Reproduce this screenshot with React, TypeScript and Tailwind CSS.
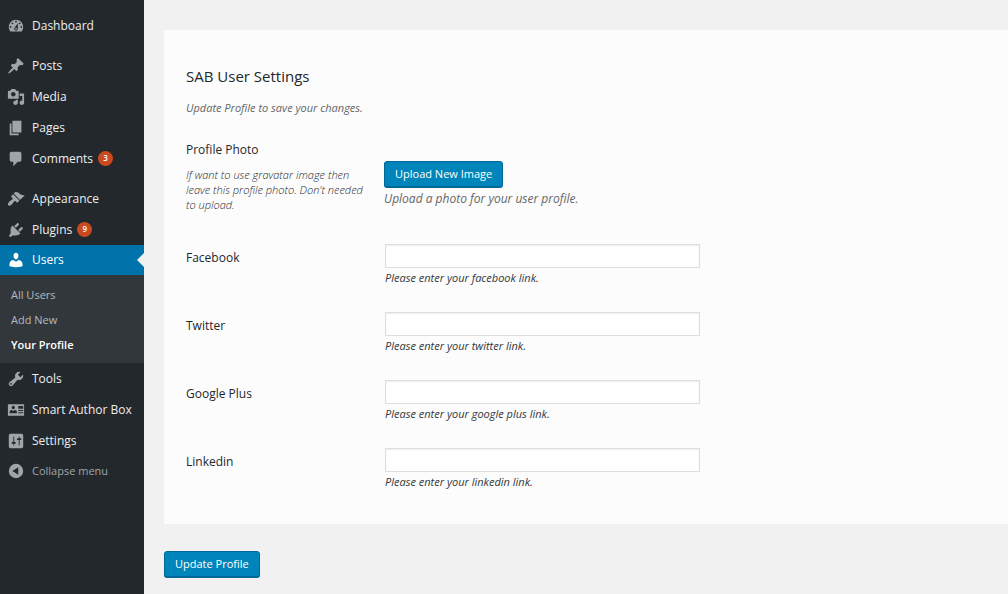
import React from "react";

const paths = {
  dashboard:
    "M3.76 16h12.48c1.1-1.37 1.76-3.11 1.76-5 0-4.42-3.58-8-8-8s-8 3.58-8 8c0 1.89.66 3.63 1.76 5zM10 4c.55 0 1 .45 1 1s-.45 1-1 1-1-.45-1-1 .45-1 1-1zM6 6c.55 0 1 .45 1 1s-.45 1-1 1-1-.45-1-1 .45-1 1-1zm8 0c.55 0 1 .45 1 1s-.45 1-1 1-1-.45-1-1 .45-1 1-1zm-5.37 5.55L12 7v6c0 1.1-.9 2-2 2s-2-.9-2-2c0-.57.24-1.08.63-1.45zM4 10c.55 0 1 .45 1 1s-.45 1-1 1-1-.45-1-1 .45-1 1-1zm12 0c.55 0 1 .45 1 1s-.45 1-1 1-1-.45-1-1 .45-1 1-1zm-5 3c0-.55-.45-1-1-1s-1 .45-1 1 .45 1 1 1 1-.45 1-1z",
  posts:
    "M10.44 3.02l1.82-1.82 6.36 6.35-1.83 1.82c-1.05-.68-2.48-.57-3.41.36l-.75.75c-.92.93-1.04 2.35-.35 3.41l-1.83 1.82-2.41-2.41-2.8 2.79c-.42.42-3.38 2.71-3.8 2.29s1.86-3.39 2.28-3.81l2.79-2.79L4.1 9.36l1.83-1.82c1.05.69 2.48.57 3.4-.36l.75-.75c.93-.92 1.05-2.35.36-3.41z",
  media:
    "M13 11V4c0-.55-.45-1-1-1h-1.67L9 1H5L3.67 3H2c-.55 0-1 .45-1 1v7c0 .55.45 1 1 1h10c.55 0 1-.45 1-1zM7 4.5c1.38 0 2.5 1.12 2.5 2.5S8.38 9.5 7 9.5 4.5 8.38 4.5 7 5.62 4.5 7 4.5zM14 6h5v10.5c0 1.38-1.12 2.5-2.5 2.5S14 17.88 14 16.5s1.12-2.5 2.5-2.5c.17 0 .34.02.5.05V9h-3V6zm-4 8.05V13h2v3.5c0 1.38-1.12 2.5-2.5 2.5S7 17.88 7 16.5 8.12 14 9.5 14c.17 0 .34.02.5.05z",
  pages: "M6 15V2h10v13H6zm-1 1h8v2H3V5h2v11z",
  comments:
    "M5 2h9c1.1 0 2 .9 2 2v7c0 1.1-.9 2-2 2h-2l-5 5v-5H5c-1.1 0-2-.9-2-2V4c0-1.1.9-2 2-2z",
  appearance:
    "M14.48 11.06L7.41 3.99l1.5-1.5c.5-.56 2.3-.47 3.51.32 1.21.8 1.43 1.28 2.91 2.1 1.18.64 2.45 1.26 4.45.85zm-.71.71L6.7 4.7 4.93 6.47c-.39.39-.39 1.02 0 1.41l1.06 1.06c.39.39.39 1.03 0 1.42-.6.6-1.43 1.11-2.21 1.69-.35.26-.7.53-1.01.84C1.43 14.23.4 16.08 1.4 17.07c.99 1 2.84-.03 4.18-1.36.31-.31.58-.66.85-1.02.57-.78 1.08-1.61 1.69-2.21.39-.39 1.02-.39 1.41 0l1.06 1.06c.39.39 1.02.39 1.41 0z",
  plugins:
    "M13.11 4.36L9.87 7.6 8 5.73l3.24-3.24c.35-.34 1.05-.2 1.56.32.52.51.66 1.21.31 1.55zm-8 1.77l.91-1.12 9.01 9.01-1.19.84c-.71.71-2.63 1.16-3.82 1.16H6.14L4.9 17.26c-.59.59-1.54.59-2.12 0-.59-.58-.59-1.53 0-2.12l1.24-1.24v-3.88c0-1.13.4-3.19 1.09-3.89zm7.26 3.97l3.24-3.24c.34-.35 1.04-.21 1.55.31.52.51.66 1.21.31 1.55l-3.24 3.25z",
  users:
    "M10 9.25c-2.27 0-2.73-3.44-2.73-3.44C7 4.02 7.82 2 9.97 2c2.16 0 2.98 2.02 2.71 3.81 0 0-.41 3.44-2.68 3.44zm0 2.57L12.72 10c2.39 0 4.52 2.33 4.52 4.53v2.49s-3.65 1.13-7.24 1.13c-3.65 0-7.24-1.13-7.24-1.13v-2.49c0-2.25 1.94-4.48 4.47-4.48z",
  tools:
    "M16.68 9.77c-1.34 1.34-3.3 1.67-4.95.99l-5.41 6.52c-.99.99-2.59.99-3.58 0s-.99-2.59 0-3.57l6.52-5.42c-.68-1.65-.35-3.61.99-4.95 1.28-1.28 3.12-1.62 4.72-1.06l-2.89 2.89 2.82 2.82 2.86-2.87c.53 1.58.18 3.39-1.08 4.65zM3.81 16.21c.4.39 1.04.39 1.43 0 .4-.4.4-1.04 0-1.43-.39-.4-1.03-.4-1.43 0-.39.39-.39 1.03 0 1.43z",
  authorBox:
    "M1.500 3.500h17c.3 0 .5.2.5.5v12c0 .3-.2.5-.5.5h-17c-.3 0-.5-.2-.5-.5V4c0-.3.2-.5.5-.5zM7 5.300a1.800 2 0 100 4 1.800 2 0 000-4zM3 13.500h8v-1.300c0-1.200-1-2.200-2.300-2.200L7 11l-1.700-1C4 10 3 11 3 12.200zM12.500 5.500v3H18v-3zM12.500 10v1.200H18V10zM12.500 12.500v1.200H18v-1.200z",
  settings:
    "M18 16V4c0-1.100-.9-2-2-2H4c-1.100 0-2 .9-2 2v12c0 1.100.9 2 2 2h12c1.100 0 2-.9 2-2zM8 11h1c.55 0 1 .45 1 1s-.45 1-1 1H8v1.500c0 .28-.22.5-.5.5s-.5-.22-.5-.5V13H6c-.55 0-1-.45-1-1s.45-1 1-1h1V5.500c0-.28.22-.5.5-.5s.5.22.5.5V11zm5-2h-1c-.55 0-1-.45-1-1s.45-1 1-1h1V5.500c0-.28.22-.5.5-.5s.5.22.5.5V7h1c.55 0 1 .45 1 1s-.45 1-1 1h-1v5.500c0 .28-.22.5-.5.5s-.5-.22-.5-.5V9z",
  collapse: "M10 2a8 8 0 100 16 8 8 0 000-16zM12.500 5.800v8.400L6 10z",
};

type IconName = keyof typeof paths;

function Icon({ name }: { name: IconName }) {
  return (
    <svg viewBox="0 0 20 20" className="size-[18px] shrink-0" fill="currentColor" fillRule="evenodd" aria-hidden="true">
      <path d={paths[name]} />
    </svg>
  );
}

interface Item {
  icon: IconName;
  label: string;
  count?: number;
}

const groups: Item[][] = [
  [{ icon: "dashboard", label: "Dashboard" }],
  [
    { icon: "posts", label: "Posts" },
    { icon: "media", label: "Media" },
    { icon: "pages", label: "Pages" },
    { icon: "comments", label: "Comments", count: 3 },
  ],
  [
    { icon: "appearance", label: "Appearance" },
    { icon: "plugins", label: "Plugins", count: 9 },
  ],
];

const lower: Item[] = [
  { icon: "tools", label: "Tools" },
  { icon: "authorBox", label: "Smart Author Box" },
  { icon: "settings", label: "Settings" },
];

const row = "flex w-full items-center gap-[7px] pl-[7px] whitespace-nowrap";

function MenuItem({ icon, label, count }: Item) {
  return (
    <li>
      <a href="#" className={`${row} h-[31px] text-xs text-[#eeeeee] hover:text-[#00b9eb]`}>
        <span className="text-[#a0a5aa]">
          <Icon name={icon} />
        </span>
        <span className="flex items-center gap-[5px]">
          {label}
          {count !== undefined && (
            <span className="flex size-[15px] items-center justify-center rounded-full bg-[#ca4a1f] text-[8px] font-semibold text-white">
              {count}
            </span>
          )}
        </span>
      </a>
    </li>
  );
}

function Sidebar() {
  return (
    <nav aria-label="Main menu" className="w-36 shrink-0 bg-[#23282d] pt-[10px]">
      <div className="flex flex-col gap-[9px]">
        {groups.map((items, i) => (
          <ul key={i}>
            {items.map((item) => (
              <MenuItem key={item.label} {...item} />
            ))}
          </ul>
        ))}
      </div>
      <a href="#" className={`${row} relative h-[30px] bg-[#0073aa] text-xs text-white`}>
        <Icon name="users" />
        Users
        <span className="absolute top-1/2 right-0 -translate-y-1/2 border-y-[7px] border-r-[7px] border-y-transparent border-r-[#f1f1f1]" />
      </a>
      <ul className="bg-[#32373c] pt-[7px] pb-[6px] text-[11px] leading-[25px] text-[#b4b9be]">
        <li>
          <a href="#" className="block px-[11px]">All Users</a>
        </li>
        <li>
          <a href="#" className="block px-[11px]">Add New</a>
        </li>
        <li>
          <a href="#" aria-current="page" className="block px-[11px] font-semibold text-white">Your Profile</a>
        </li>
      </ul>
      <ul>
        {lower.map((item) => (
          <MenuItem key={item.label} {...item} />
        ))}
      </ul>
      <button type="button" className={`${row} h-[30px] text-[11px] text-[#a0a5aa]`}>
        <Icon name="collapse" />
        Collapse menu
      </button>
    </nav>
  );
}

const fields = [
  { id: "facebook", label: "Facebook", hint: "Please enter your facebook link." },
  { id: "twitter", label: "Twitter", hint: "Please enter your twitter link." },
  { id: "google", label: "Google Plus", hint: "Please enter your google plus link." },
  { id: "linkedin", label: "Linkedin", hint: "Please enter your linkedin link." },
];

const button =
  "block h-[26px] rounded-[3px] border border-[#006799] bg-[#0085ba] px-[10px] text-[11px] leading-5 text-white shadow-[0_1px_0_#006799] hover:bg-[#008ec2]";

export default function App() {
  return (
    <div className="flex min-h-screen bg-[#f1f1f1] font-['Open_Sans','Noto_Sans',sans-serif] text-[#23282d]">
      <Sidebar />
      <main className="min-w-0 flex-1 pt-[30px] pl-5">
        <form onSubmit={(e) => e.preventDefault()}>
          <section className="bg-[#fcfcfc] px-[22px] pt-9 pb-8">
            <h2 className="text-[15px] leading-5">SAB User Settings</h2>
            <p className="mt-3 text-[11px] leading-5 text-[#666666] italic">Update Profile to save your changes.</p>
            <div className="mt-[22px] flex">
              <div className="w-[198px] shrink-0 pr-4">
                <h3 className="text-xs leading-5 font-medium">Profile Photo</h3>
                <p className="mt-[7px] text-[11px] leading-[15px] font-light italic">
                  If want to use gravatar image then leave this profile photo. Don't needed to upload.
                </p>
              </div>
              <div className="pt-[21px]">
                <button type="button" className={button}>Upload New Image</button>
                <p className="mt-[2px] text-xs leading-5 text-[#666666] italic">Upload a photo for your user profile.</p>
              </div>
            </div>
            <div className="mt-8 flex flex-col gap-6">
              {fields.map(({ id, label, hint }) => (
                <div key={id} className="flex">
                  <label htmlFor={id} className="w-[199px] shrink-0 pt-1 text-xs leading-5 font-medium">
                    {label}
                  </label>
                  <div>
                    <input
                      id={id}
                      type="text"
                      aria-describedby={`${id}-hint`}
                      className="block h-6 w-[315px] border border-[#dddddd] bg-white px-1 text-xs shadow-[inset_0_1px_2px_rgba(0,0,0,0.07)]"
                    />
                    <p id={`${id}-hint`} className="text-[11px] leading-5 text-[#32373c] italic">{hint}</p>
                  </div>
                </div>
              ))}
            </div>
          </section>
          <button type="submit" className={`${button} mt-[27px]`}>Update Profile</button>
        </form>
      </main>
    </div>
  );
}
